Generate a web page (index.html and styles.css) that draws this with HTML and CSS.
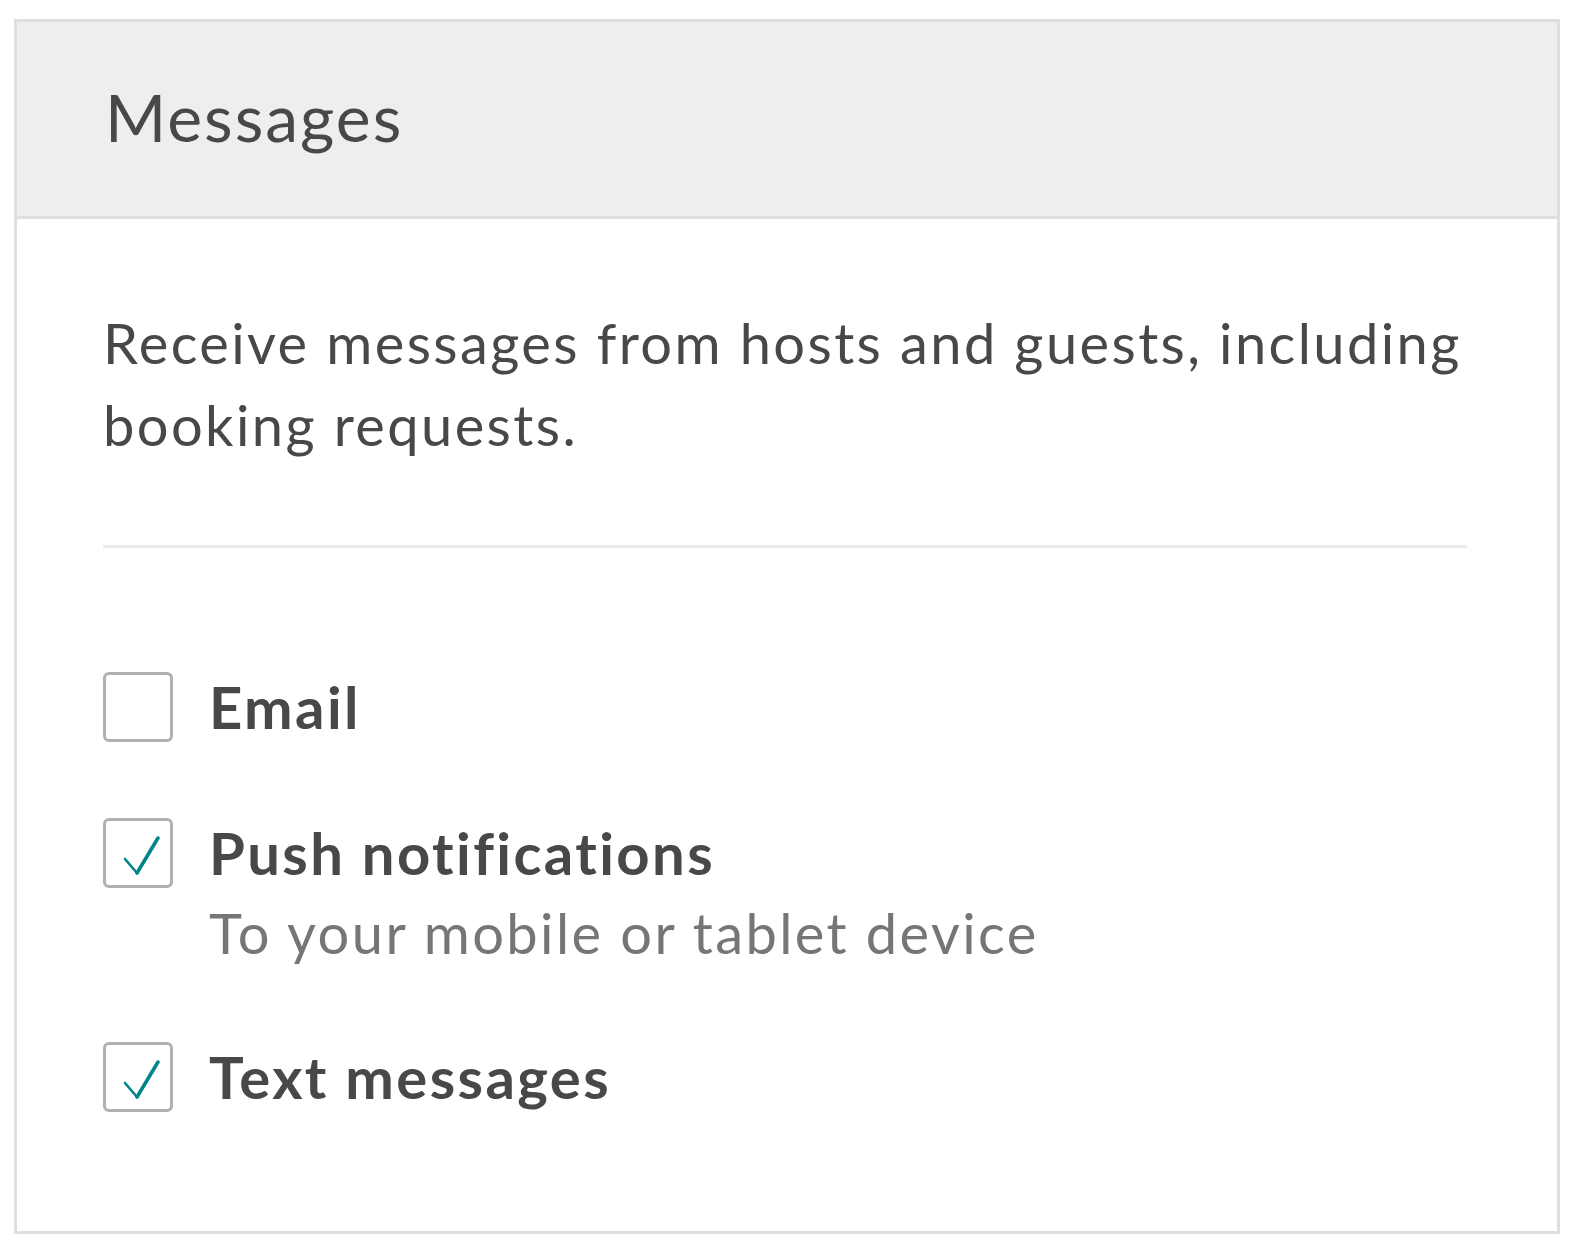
FILE: index.html
```html
<!DOCTYPE html>
<html lang="en">
<head>
<meta charset="utf-8">
<title>Messages</title>
<link rel="stylesheet" href="styles.css">
</head>
<body>
<section class="card">
  <header class="card-header">
    <h2 class="card-title">Messages</h2>
  </header>
  <div class="card-body">
    <p class="intro">Receive messages from hosts and guests, including booking requests.</p>
    <hr class="divider">
    <ul class="options">
      <li class="option">
        <span class="box"></span>
        <div class="option-text">
          <div class="label">Email</div>
        </div>
      </li>
      <li class="option">
        <span class="box">
          <svg class="check" viewBox="0 0 64 64" width="64" height="64"><path class="thin" d="M19 38 L31 52"/><path d="M31 52 L52 17"/></svg>
        </span>
        <div class="option-text">
          <div class="label">Push notifications</div>
          <div class="sub">To your mobile or tablet device</div>
        </div>
      </li>
      <li class="option">
        <span class="box">
          <svg class="check" viewBox="0 0 64 64" width="64" height="64"><path class="thin" d="M19 38 L31 52"/><path d="M31 52 L52 17"/></svg>
        </span>
        <div class="option-text">
          <div class="label">Text messages</div>
        </div>
      </li>
    </ul>
  </div>
</section>
</body>
</html>
```

FILE: styles.css
```css
html, body {
  margin: 0;
  padding: 0;
  background: #ffffff;
}

body {
  font-family: Lato, "Open Sans", sans-serif;
  color: #484848;
}

.card {
  box-sizing: border-box;
  width: 1546px;
  height: 1215px;
  margin: 19px 0 0 14px;
  border: 3px solid #dde0df;
  display: flex;
  flex-direction: column;
}

.card-header {
  box-sizing: border-box;
  height: 197px;
  background: #edefed;
  border-bottom: 3px solid #dde0df;
  padding: 0 0 0 88px;
  display: flex;
  align-items: center;
}

.card-title {
  margin: 0;
  font-weight: 400;
  font-size: 66px;
  line-height: 80px;
  letter-spacing: 2px;
  color: #484848;
  padding-bottom: 4px;
}

.card-body {
  padding: 83px 40px 0 86px;
}

.intro {
  margin: 0;
  font-size: 56px;
  line-height: 82px;
  letter-spacing: 2.4px;
}

.divider {
  margin: 79px 0 0 0;
  border: 0;
  height: 3px;
  background: #ebebeb;
  width: 1364px;
}

.options {
  list-style: none;
  margin: 0;
  padding: 124px 0 0 0;
  display: flex;
  flex-direction: column;
  gap: 68px;
}

.option {
  display: flex;
  align-items: flex-start;
  gap: 36px;
  min-height: 78px;
}

.box {
  box-sizing: border-box;
  flex: none;
  width: 70px;
  height: 70px;
  border: 3px solid #b0b0b0;
  border-radius: 6px;
  display: flex;
  align-items: center;
  justify-content: center;
}

.check {
  display: block;
  fill: none;
  stroke: #008489;
  stroke-width: 3.5;
  stroke-linecap: round;
  stroke-linejoin: round;
}

.check .thin {
  stroke-width: 2.6;
}

.label {
  font-weight: 700;
  font-size: 58px;
  line-height: 70px;
  letter-spacing: 2.4px;
  color: #484848;
}

.sub {
  margin-top: 4px;
  font-size: 56px;
  line-height: 82px;
  letter-spacing: 2.4px;
  color: #767676;
}
```
